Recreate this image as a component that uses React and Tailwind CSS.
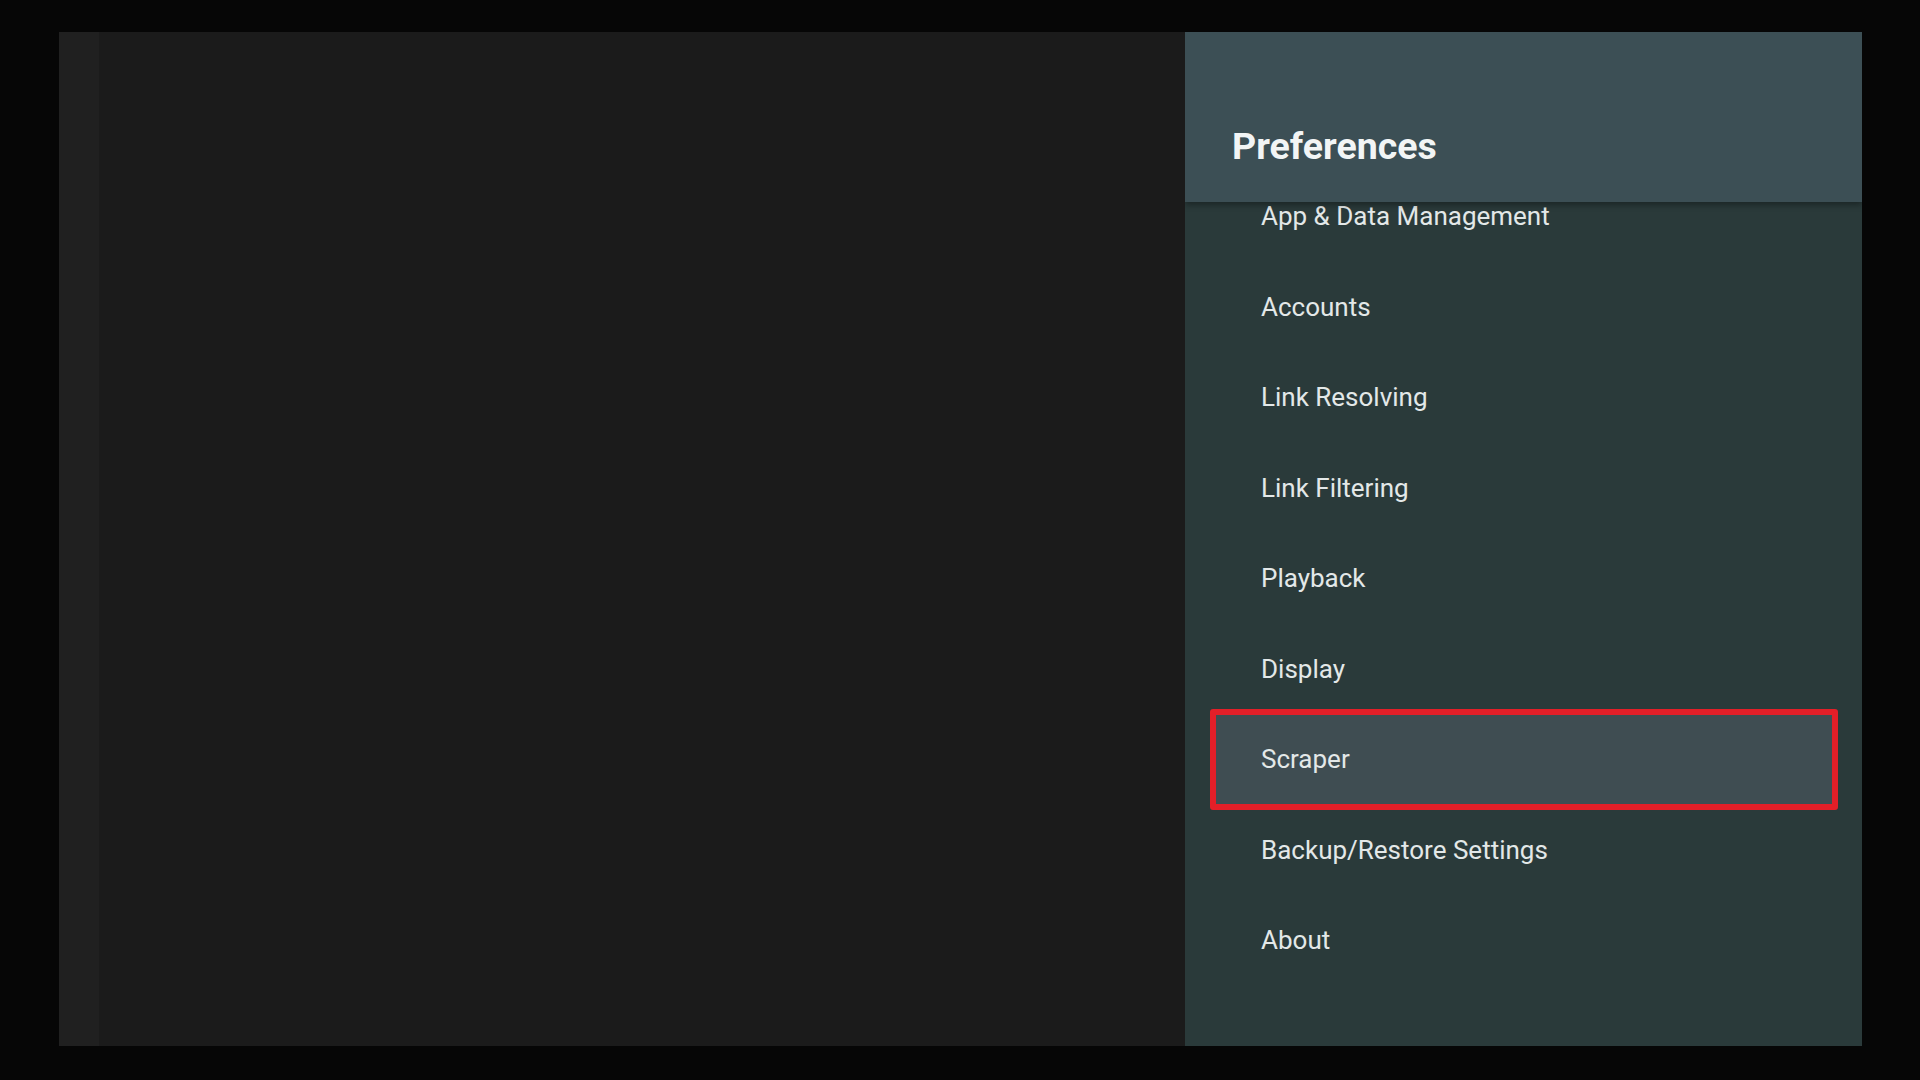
const ITEMS = [
  'App & Data Management',
  'Accounts',
  'Link Resolving',
  'Link Filtering',
  'Playback',
  'Display',
  'Scraper',
  'Backup/Restore Settings',
  'About'
];

const SELECTED = 'Scraper';

const MenuRow = ({ label, selected }) => {
  return (
    <div className="relative h-[90.5px] flex items-center pl-[76px] shrink-0">
      {selected && (
        <span className="absolute -top-[5px] -bottom-[5px] left-[25px] right-[24px] rounded-[3px] border-[6px] border-[#e31f28] bg-[#3f4d52]" />
      )}
      <span className="relative text-[26px] leading-none text-[#e3e8e8]">{label}</span>
    </div>
  );
};

export default function App() {
  return (
    <div
      className="w-screen h-screen bg-[#060606] pl-[59px] pr-[58px] pt-[32px] pb-[34px] flex"
      style={{ fontFamily: 'Roboto, "Noto Sans", sans-serif' }}
    >
      <div className="flex-1 flex bg-[#1b1b1b]">
        <div className="w-[40px] bg-[#202020]" />
        <div className="flex-1" />
      </div>
      <div className="w-[677px] flex flex-col bg-[#2a3a3a] overflow-hidden">
        <div className="relative z-10 h-[170px] shrink-0 bg-[#3c4f55] pl-[47px] pt-[94px] shadow-[0_3px_6px_rgba(0,0,0,0.35)]">
          <h1 className="text-[37.5px] leading-[40px] font-bold text-[#f2f5f5]">Preferences</h1>
        </div>
        <div className="flex-1 flex flex-col -mt-[31px]">
          {ITEMS.map((item) => (
            <MenuRow key={item} label={item} selected={item === SELECTED} />
          ))}
        </div>
      </div>
    </div>
  );
}
